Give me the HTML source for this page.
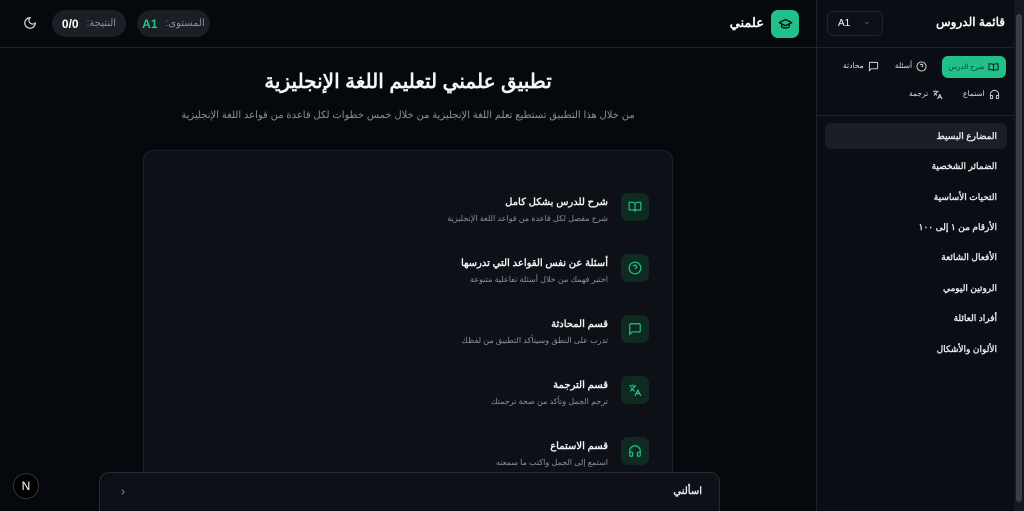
<!DOCTYPE html>
<html><head><meta charset="utf-8"><style>
*{box-sizing:border-box;margin:0;padding:0}
html,body{width:1024px;height:511px;overflow:hidden}
body{background:#05080d;font-family:"Liberation Sans","Noto Sans CJK SC",sans-serif;color:#e6e8eb;position:relative}
.abs{position:absolute}
.rtl{direction:rtl}
svg{display:block}
.pill{position:absolute;top:10px;height:27px;border-radius:14px;background:#1a1e25;display:flex;align-items:center;justify-content:center;gap:8px;font-size:10px;color:#8a9099;direction:rtl}
.item{position:absolute;left:0;width:530px;height:40px}
.item .ic{position:absolute;left:477px;top:0;width:28px;height:28px;border-radius:7px;background:#0f2a20;display:flex;align-items:center;justify-content:center}
.item .t{position:absolute;right:66px;top:4px;font-size:10px;font-weight:bold;color:#f1f3f5;direction:rtl;white-space:nowrap}
.item .d{position:absolute;right:66px;top:21px;font-size:8px;color:#8a9099;direction:rtl;white-space:nowrap}
.side{position:absolute;left:816px;top:0;width:198px;height:511px;background:#0a0e14;border-left:1px solid #1f242c}
.li{position:absolute;left:8px;width:182px;height:26px;border-radius:7px;font-size:9px;font-weight:bold;color:#e6e8eb;direction:rtl;padding-right:10px;line-height:26px}
</style></head><body>
<div class="abs" style="left:0;top:47px;width:816px;height:1px;background:#1f242c"></div>
<div class="abs" style="left:23px;top:16px"><svg width="14" height="14" viewBox="0 0 24 24" fill="none" stroke="#ddd" stroke-width="2" stroke-linecap="round"><path d="M12 3a6 6 0 0 0 9 9 9 9 0 1 1-9-9Z"/></svg></div>
<div class="pill" style="left:52px;width:74px"><span>النتيجة:</span><span style="color:#fff;font-weight:bold;font-size:12px">0/0</span></div>
<div class="pill" style="left:137px;width:73px"><span>المستوى:</span><span style="color:#22c58b;font-weight:bold;font-size:12px">A1</span></div>
<div class="abs" style="left:771px;top:10px;width:28px;height:28px;border-radius:7px;background:#20c08a;display:flex;align-items:center;justify-content:center"><svg width="15" height="15" viewBox="0 0 24 24" fill="none" stroke="#0b0f14" stroke-width="2.2" stroke-linejoin="round"><path d="M2 9l10-5 10 5-10 5z"/><path d="M6 11v5c3 2 9 2 12 0v-5"/></svg></div>
<div class="abs rtl" style="left:722px;top:15px;width:42px;font-size:13px;font-weight:bold;color:#fff">علمني</div>
<div class="abs rtl" style="left:0;top:69px;width:816px;text-align:center;font-size:20px;font-weight:bold;color:#f5f6f7">تطبيق علمني لتعليم اللغة الإنجليزية</div>
<div class="abs rtl" style="left:0;top:110px;width:816px;text-align:center;font-size:10px;color:#8a9099">من خلال هذا التطبيق تستطيع تعلم اللغة الإنجليزية من خلال خمس خطوات لكل قاعدة من قواعد اللغة الإنجليزية</div>
<div class="abs" style="left:143px;top:150px;width:530px;height:380px;border-radius:10px;background:#0d1117;border:1px solid #1b2028">
 <div class="item" style="top:42px"><div class="ic"><svg width="14" height="14" viewBox="0 0 24 24" fill="none" stroke="#22c58b" stroke-width="2"><path d="M2 4h6a4 4 0 0 1 4 4v12a3 3 0 0 0-3-3H2zM22 4h-6a4 4 0 0 0-4 4v12a3 3 0 0 1 3-3h7z"/></svg></div><div class="t">شرح للدرس بشكل كامل</div><div class="d">شرح مفصل لكل قاعدة من قواعد اللغة الإنجليزية</div></div>
 <div class="item" style="top:103px"><div class="ic"><svg width="14" height="14" viewBox="0 0 24 24" fill="none" stroke="#22c58b" stroke-width="2"><circle cx="12" cy="12" r="10"/><path d="M9.1 9a3 3 0 0 1 5.8 1c0 2-3 3-3 3M12 17h.01"/></svg></div><div class="t">أسئلة عن نفس القواعد التي تدرسها</div><div class="d">اختبر فهمك من خلال أسئلة تفاعلية متنوعة</div></div>
 <div class="item" style="top:164px"><div class="ic"><svg width="14" height="14" viewBox="0 0 24 24" fill="none" stroke="#22c58b" stroke-width="2"><path d="M21 15a2 2 0 0 1-2 2H7l-4 4V5a2 2 0 0 1 2-2h14a2 2 0 0 1 2 2z"/></svg></div><div class="t">قسم المحادثة</div><div class="d">تدرب على النطق وسيتأكد التطبيق من لفظك</div></div>
 <div class="item" style="top:225px"><div class="ic"><svg width="14" height="14" viewBox="0 0 24 24" fill="none" stroke="#22c58b" stroke-width="2"><path d="M5 8l6 6M4 14l6-6 2-3M2 5h12M7 2h1M22 22l-5-10-5 10M14 18h6"/></svg></div><div class="t">قسم الترجمة</div><div class="d">ترجم الجمل وتأكد من صحة ترجمتك</div></div>
 <div class="item" style="top:286px"><div class="ic"><svg width="14" height="14" viewBox="0 0 24 24" fill="none" stroke="#22c58b" stroke-width="2"><path d="M3 14h3a2 2 0 0 1 2 2v3a2 2 0 0 1-2 2H5a2 2 0 0 1-2-2v-7a9 9 0 0 1 18 0v7a2 2 0 0 1-2 2h-1a2 2 0 0 1-2-2v-3a2 2 0 0 1 2-2h3"/></svg></div><div class="t">قسم الاستماع</div><div class="d">استمع إلى الجمل واكتب ما سمعته</div></div>
</div>
<div class="abs" style="left:99px;top:472px;width:621px;height:50px;border-radius:10px;background:#0d1117;border:1px solid #262b33"></div>
<div class="abs" style="left:118px;top:486px"><svg width="10" height="12" viewBox="0 0 24 24" fill="none" stroke="#999" stroke-width="2"><path d="M9 6l6 6-6 6"/></svg></div>
<div class="abs rtl" style="left:660px;top:486px;width:42px;font-size:10px;color:#e6e8eb;font-weight:bold">اسألني</div>
<div class="abs" style="left:13px;top:473px;width:26px;height:26px;border-radius:50%;background:#000;border:1px solid #333;color:#fff;font-size:12px;text-align:center;line-height:24px">N</div>
<div class="side">
 <div class="abs" style="left:10px;top:11px;width:56px;height:25px;border-radius:6px;border:1px solid #1f242c;background:#0d1117;font-size:10px;color:#fff;padding:6px 0 0 10px">A1<span style="position:absolute;left:35px;top:4px;color:#666;font-size:9px">⌄</span></div>
 <div class="abs rtl" style="left:110px;top:15px;width:78px;font-size:12px;font-weight:bold;color:#fff">قائمة الدروس</div>
 <div class="abs" style="left:0;top:47px;width:198px;height:1px;background:#1f242c"></div>
 <div class="abs" style="left:125px;top:56px;width:64px;height:22px;border-radius:6px;background:#20c08a;display:flex;align-items:center;justify-content:center;gap:4px;direction:rtl;font-size:7px"><svg width="11" height="11" viewBox="0 0 24 24" fill="none" stroke="#08261b" stroke-width="2.2"><path d="M2 4h6a4 4 0 0 1 4 4v12a3 3 0 0 0-3-3H2zM22 4h-6a4 4 0 0 0-4 4v12a3 3 0 0 1 3-3h7z"/></svg><span style="color:#0a3d2a">شرح الدرس</span></div>
 <div class="abs rtl" style="left:78px;top:61px;display:flex;gap:4px;font-size:7.5px;color:#ddd"><svg width="11" height="11" viewBox="0 0 24 24" fill="none" stroke="#ddd" stroke-width="2"><circle cx="12" cy="12" r="10"/><path d="M9.1 9a3 3 0 0 1 5.8 1c0 2-3 3-3 3M12 17h.01"/></svg>أسئلة</div>
 <div class="abs rtl" style="left:26px;top:61px;display:flex;gap:4px;font-size:7.5px;color:#ddd"><svg width="11" height="11" viewBox="0 0 24 24" fill="none" stroke="#ddd" stroke-width="2"><path d="M21 15a2 2 0 0 1-2 2H7l-4 4V5a2 2 0 0 1 2-2h14a2 2 0 0 1 2 2z"/></svg>محادثة</div>
 <div class="abs rtl" style="left:146px;top:89px;display:flex;gap:4px;font-size:7.5px;color:#ddd"><svg width="11" height="11" viewBox="0 0 24 24" fill="none" stroke="#ddd" stroke-width="2"><path d="M3 14h3a2 2 0 0 1 2 2v3a2 2 0 0 1-2 2H5a2 2 0 0 1-2-2v-7a9 9 0 0 1 18 0v7a2 2 0 0 1-2 2h-1a2 2 0 0 1-2-2v-3a2 2 0 0 1 2-2h3"/></svg>استماع</div>
 <div class="abs rtl" style="left:92px;top:89px;display:flex;gap:4px;font-size:7.5px;color:#ddd"><svg width="11" height="11" viewBox="0 0 24 24" fill="none" stroke="#ddd" stroke-width="2"><path d="M5 8l6 6M4 14l6-6 2-3M2 5h12M7 2h1M22 22l-5-10-5 10M14 18h6"/></svg>ترجمة</div>
 <div class="abs" style="left:0;top:115px;width:198px;height:1px;background:#1f242c"></div>
 <div class="li" style="top:123px;background:#1a1e25">المضارع البسيط</div>
 <div class="li" style="top:153px">الضمائر الشخصية</div>
 <div class="li" style="top:184px">التحيات الأساسية</div>
 <div class="li" style="top:214px">الأرقام من ١ إلى ١٠٠</div>
 <div class="li" style="top:244px">الأفعال الشائعة</div>
 <div class="li" style="top:275px">الروتين اليومي</div>
 <div class="li" style="top:305px">أفراد العائلة</div>
 <div class="li" style="top:336px">الألوان والأشكال</div>
</div>
<div class="abs" style="left:1014px;top:0;width:10px;height:511px;background:#141920"></div>
<div class="abs" style="left:1016px;top:14px;width:6px;height:488px;background:#3a3f47;border-radius:3px"></div>
</body></html>
